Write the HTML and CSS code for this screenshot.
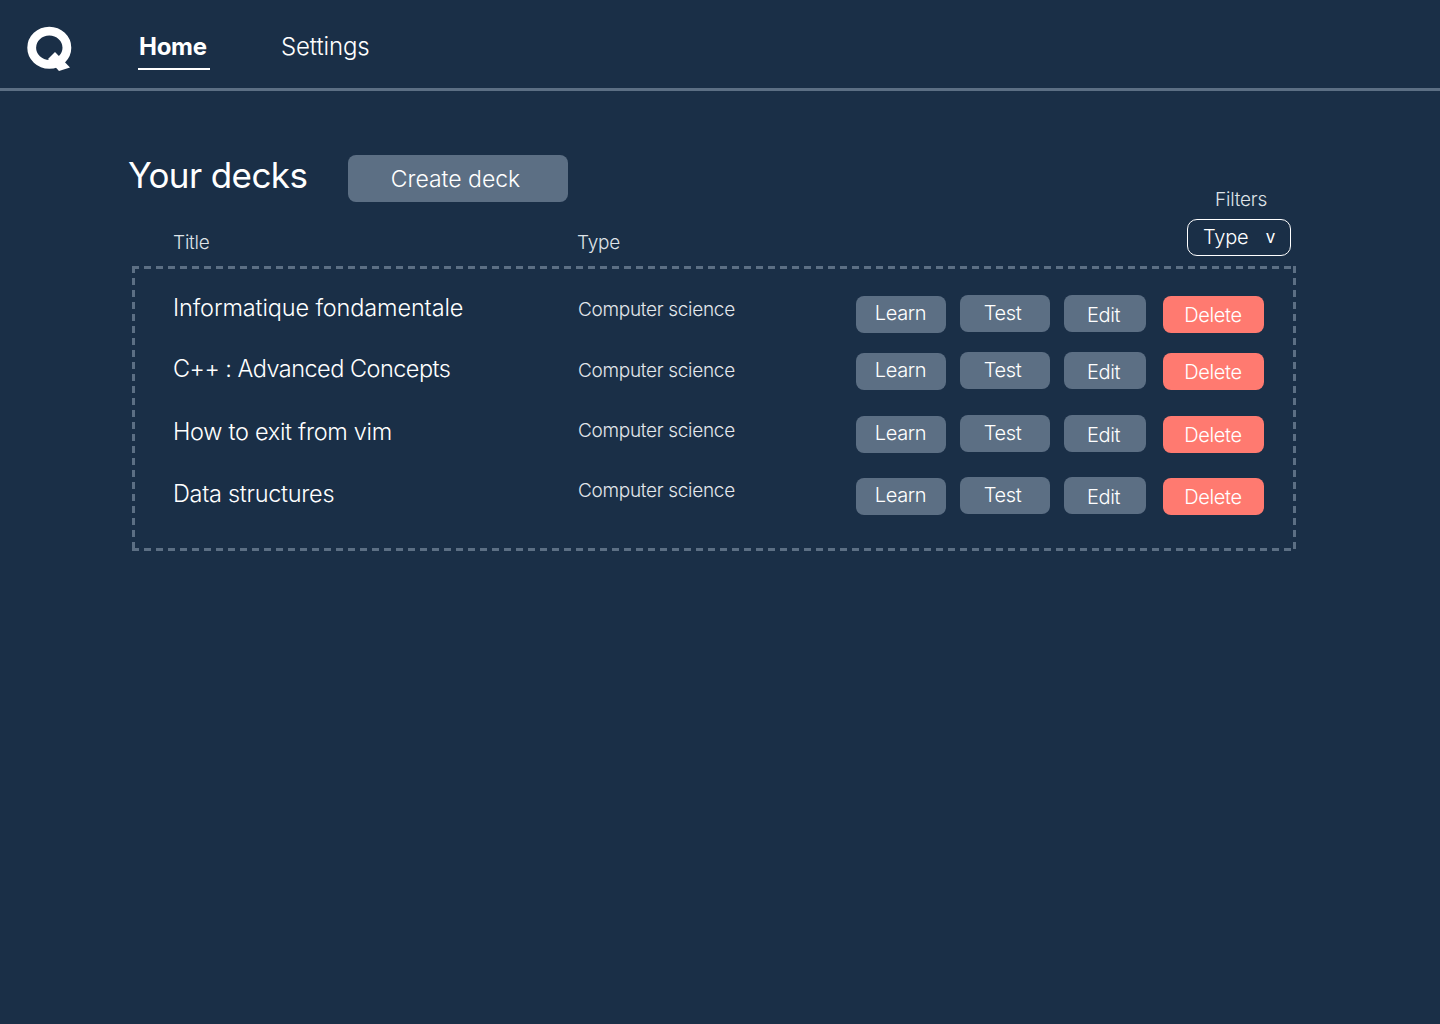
FILE: index.html
```html
<!DOCTYPE html>
<html lang="en">
	<head>
		<meta charset="utf-8" />
		<title>Your decks</title>
		<link rel="stylesheet" href="styles.css">
	</head>
	<body>
		<header class="topbar">
			<svg class="logo" width="46" height="46" viewBox="0 0 46 46" aria-label="Logo">
				<ellipse cx="22.3" cy="21.7" rx="17.6" ry="16.6" fill="none" stroke="#fff" stroke-width="8.8"/>
				<polygon points="28,26 21,33 32,45 43,41.5" fill="#fff"/>
			</svg>
			<nav class="nav">
				<a class="nav-link active" href="#">Home</a>
				<a class="nav-link" href="#">Settings</a>
			</nav>
		</header>
		<main class="content">
			<div class="heading">
				<h1>Your decks</h1>
				<button class="btn btn-create">Create deck</button>
			</div>
			<div class="columns">
				<span class="col-title">Title</span>
				<span class="col-type">Type</span>
				<div class="filters">
					<span class="filters-label">Filters</span>
					<div class="select">Type <span class="caret">v</span></div>
				</div>
			</div>
			<section class="decks">
				<div class="deck deck-1">
					<span class="deck-title">Informatique fondamentale</span>
					<span class="deck-type">Computer science</span>
					<div class="actions">
						<button class="btn btn-learn">Learn</button>
						<button class="btn btn-test">Test</button>
						<button class="btn btn-edit">Edit</button>
						<button class="btn btn-delete">Delete</button>
					</div>
				</div>
				<div class="deck deck-2">
					<span class="deck-title">C++ : Advanced Concepts</span>
					<span class="deck-type">Computer science</span>
					<div class="actions">
						<button class="btn btn-learn">Learn</button>
						<button class="btn btn-test">Test</button>
						<button class="btn btn-edit">Edit</button>
						<button class="btn btn-delete">Delete</button>
					</div>
				</div>
				<div class="deck deck-3">
					<span class="deck-title">How to exit from vim</span>
					<span class="deck-type">Computer science</span>
					<div class="actions">
						<button class="btn btn-learn">Learn</button>
						<button class="btn btn-test">Test</button>
						<button class="btn btn-edit">Edit</button>
						<button class="btn btn-delete">Delete</button>
					</div>
				</div>
				<div class="deck deck-4">
					<span class="deck-title">Data structures</span>
					<span class="deck-type">Computer science</span>
					<div class="actions">
						<button class="btn btn-learn">Learn</button>
						<button class="btn btn-test">Test</button>
						<button class="btn btn-edit">Edit</button>
						<button class="btn btn-delete">Delete</button>
					</div>
				</div>
			</section>
		</main>
	</body>
</html>
```

FILE: styles.css
```css
html, body {
	margin: 0;
	padding: 0;
	height: 100%;
	overflow: hidden;
}
body {
	font-family: Inter, "Open Sans", sans-serif;
	background-color: #1a2f47;
	color: #fff;
}
.topbar {
	box-sizing: border-box;
	height: 91px;
	padding: 26px 0 0 27px;
	display: flex;
	align-items: flex-start;
	border-bottom: 3px solid #5c6f84;
}
.logo {
	display: block;
}
.nav {
	display: flex;
	margin-left: 65px;
	gap: 70px;
}
.nav-link {
	display: block;
	box-sizing: border-box;
	height: 44px;
	padding: 2px 1px 0;
	font-size: 24px;
	letter-spacing: -0.1px;
	line-height: 38px;
	font-weight: 300;
	color: #fff;
	text-decoration: none;
}
.nav-link.active {
	font-weight: 700;
	letter-spacing: -0.3px;
	border-bottom: 2px solid #fff;
	width: 72px;
}
.content {
	width: 1164px;
	margin-left: 132px;
}
.heading {
	display: flex;
	align-items: flex-start;
	padding-top: 64px;
	height: 47px;
}
h1 {
	margin: -5px 0 0 -4px;
	width: 220px;
	font-size: 35px;
	letter-spacing: -0.6px;
	line-height: 50px;
	font-weight: 400;
}
.btn {
	display: block;
	box-sizing: border-box;
	height: 37px;
	padding: 0;
	border: 0;
	border-radius: 8px;
	font-family: inherit;
	font-size: 20px;
	letter-spacing: -0.35px;
	font-weight: 300;
	color: #fff;
	background-color: #5c6f84;
}
.btn-create {
	width: 220px;
	height: 47px;
	font-size: 23px;
	letter-spacing: 0;
	padding-right: 5px;
}
.columns {
	height: 64px;
	display: flex;
	font-size: 19px;
	letter-spacing: -0.2px;
	font-weight: 300;
	color: #dfe3e8;
}
.col-title {
	margin: 29px 0 0 41px;
	width: 404px;
	line-height: 24px;
}
.col-type {
	margin-top: 29px;
	line-height: 24px;
}
.filters {
	margin-left: auto;
	margin-right: 5px;
	margin-top: -14px;
	width: 104px;
	display: flex;
	flex-direction: column;
	align-items: center;
}
.filters-label {
	line-height: 24px;
	margin-bottom: 7px;
	margin-left: 4px;
}
.select {
	box-sizing: border-box;
	width: 104px;
	height: 37px;
	padding: 0 15px;
	display: flex;
	justify-content: space-between;
	border: 1px solid #fff;
	border-radius: 10px;
	font-size: 20px;
	letter-spacing: -0.2px;
	line-height: 34px;
	color: #fff;
}
.caret {
	font-size: 17px;
	font-weight: 400;
}
.decks {
	box-sizing: border-box;
	height: 285px;
	padding: 30px 3px 0;
	background:
		repeating-linear-gradient(to right, #5c6f84 0 7px, transparent 7px 12px) top left / 100% 3px no-repeat,
		repeating-linear-gradient(to right, #5c6f84 0 7px, transparent 7px 12px) bottom left / 100% 3px no-repeat,
		repeating-linear-gradient(to bottom, #5c6f84 0 7px, transparent 7px 12px) top left / 3px 100% no-repeat,
		repeating-linear-gradient(to bottom, #5c6f84 0 7px, transparent 7px 12px) top right / 3px 100% no-repeat;
}
.deck {
	display: flex;
	align-items: flex-start;
	height: 37px;
}
.deck-2 {
	margin-top: 20px;
}
.deck-3 {
	margin-top: 26px;
}
.deck-4 {
	margin-top: 25px;
}
.deck-title {
	margin-left: 38px;
	margin-top: 1px;
	width: 405px;
	font-size: 23.5px;
	letter-spacing: -0.3px;
	line-height: 30px;
	font-weight: 300;
}
.deck-1 .deck-title {
	margin-top: -3px;
	letter-spacing: -0.14px;
}
.deck-2 .deck-title {
	letter-spacing: -0.52px;
}
.deck-type {
	width: 278px;
	margin-top: 1px;
	font-size: 19px;
	letter-spacing: -0.3px;
	line-height: 26px;
	font-weight: 300;
	color: #e3e7ec;
}
.deck-2 .deck-type {
	margin-top: 5px;
}
.deck-3 .deck-type {
	margin-top: 2px;
}
.deck-4 .deck-type {
	margin-top: 0;
}
.actions {
	display: flex;
	align-items: flex-start;
}
.btn-learn {
	width: 90px;
	padding: 0 1px 3px 0;
}
.btn-test {
	width: 90px;
	margin: -1px 0 0 14px;
	padding: 0 5px 2px 0;
}
.btn-edit {
	width: 82px;
	margin: -1px 0 0 14px;
	padding: 2px 3px 0 0;
}
.btn-delete {
	width: 101px;
	margin-left: 17px;
	padding-right: 1px;
	background-color: #ff7a70;
}
```
